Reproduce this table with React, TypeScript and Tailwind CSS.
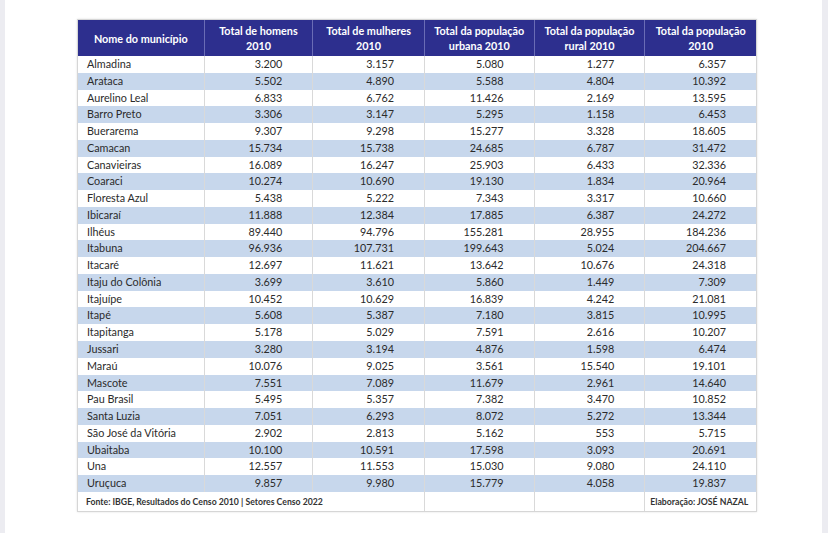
const rows: [string, string, string, string, string, string][] = [
  ["Almadina", "3.200", "3.157", "5.080", "1.277", "6.357"],
  ["Arataca", "5.502", "4.890", "5.588", "4.804", "10.392"],
  ["Aurelino Leal", "6.833", "6.762", "11.426", "2.169", "13.595"],
  ["Barro Preto", "3.306", "3.147", "5.295", "1.158", "6.453"],
  ["Buerarema", "9.307", "9.298", "15.277", "3.328", "18.605"],
  ["Camacan", "15.734", "15.738", "24.685", "6.787", "31.472"],
  ["Canavieiras", "16.089", "16.247", "25.903", "6.433", "32.336"],
  ["Coaraci", "10.274", "10.690", "19.130", "1.834", "20.964"],
  ["Floresta Azul", "5.438", "5.222", "7.343", "3.317", "10.660"],
  ["Ibicaraí", "11.888", "12.384", "17.885", "6.387", "24.272"],
  ["Ilhéus", "89.440", "94.796", "155.281", "28.955", "184.236"],
  ["Itabuna", "96.936", "107.731", "199.643", "5.024", "204.667"],
  ["Itacaré", "12.697", "11.621", "13.642", "10.676", "24.318"],
  ["Itaju do Colônia", "3.699", "3.610", "5.860", "1.449", "7.309"],
  ["Itajuípe", "10.452", "10.629", "16.839", "4.242", "21.081"],
  ["Itapé", "5.608", "5.387", "7.180", "3.815", "10.995"],
  ["Itapitanga", "5.178", "5.029", "7.591", "2.616", "10.207"],
  ["Jussari", "3.280", "3.194", "4.876", "1.598", "6.474"],
  ["Maraú", "10.076", "9.025", "3.561", "15.540", "19.101"],
  ["Mascote", "7.551", "7.089", "11.679", "2.961", "14.640"],
  ["Pau Brasil", "5.495", "5.357", "7.382", "3.470", "10.852"],
  ["Santa Luzia", "7.051", "6.293", "8.072", "5.272", "13.344"],
  ["São José da Vitória", "2.902", "2.813", "5.162", "553", "5.715"],
  ["Ubaitaba", "10.100", "10.591", "17.598", "3.093", "20.691"],
  ["Una", "12.557", "11.553", "15.030", "9.080", "24.110"],
  ["Uruçuca", "9.857", "9.980", "15.779", "4.058", "19.837"],
];

const headers = [
  "Total de homens 2010",
  "Total de mulheres 2010",
  "Total da população urbana 2010",
  "Total da população rural 2010",
  "Total da população 2010",
];

const widths = ["w-[109px]", "w-[112px]", "w-[110px]", "w-[111px]", "w-[111px]"];

export default function App() {
  return (
    <div
      className="flex w-[828px] h-[533px] bg-white overflow-hidden text-[#2b2b2b]"
      style={{ fontFamily: "Lato, 'Open Sans', sans-serif" }}
    >
      <div className="w-[5px] shrink-0 bg-[#ececf1]" />
      <div className="flex-1 pl-[72px] pt-[19px]">
        <div className="w-[680px] border border-[#d6d6d6] shadow-[0_0_2px_rgba(0,0,0,0.12)]">
          {/* header */}
          <div className="flex h-[36px] bg-[#2d2f8e] text-white font-bold text-[10.8px] leading-[15px]">
            <div className="w-[127px] flex items-center justify-center border-r border-[#6a6cb5]">
              Nome do município
            </div>
            {headers.map((h, i) => (
              <div
                key={h}
                className={`${widths[i]} flex items-center justify-center text-center px-[5px] ${
                  i < 4 ? "border-r border-[#6a6cb5]" : ""
                }`}
              >
                {h}
              </div>
            ))}
          </div>

          {/* rows */}
          {rows.map((r, idx) => (
            <div
              key={r[0]}
              className={`flex h-[16.77px] text-[10.8px] leading-[16px] ${
                idx % 2 === 1 ? "bg-[#c7d7ec]" : "bg-white"
              }`}
            >
              <div className="w-[127px] pl-[9px] border-r border-[#d9d9d9] whitespace-nowrap">{r[0]}</div>
              {r.slice(1).map((v, i) => (
                <div
                  key={i}
                  className={`${widths[i]} text-right pr-[30px] ${i < 4 ? "border-r border-[#d9d9d9]" : ""}`}
                >
                  {v}
                </div>
              ))}
            </div>
          ))}

          {/* footer */}
          <div className="flex h-[19px] items-center text-[8.7px] font-bold text-[#333]">
            <div className="w-[348px] h-full flex items-center pl-[8px] border-r border-[#d9d9d9] whitespace-nowrap">
              Fonte: IBGE, Resultados do Censo 2010 | Setores Censo 2022
            </div>
            <div className="w-[110px] h-full border-r border-[#d9d9d9]" />
            <div className="w-[111px] h-full border-r border-[#d9d9d9]" />
            <div className="w-[111px] h-full flex items-center pl-[5px] whitespace-nowrap">Elaboração: JOSÉ NAZAL</div>
          </div>
        </div>
      </div>
      <div className="w-[6px] shrink-0 bg-[#ececf1]" />
    </div>
  );
}
